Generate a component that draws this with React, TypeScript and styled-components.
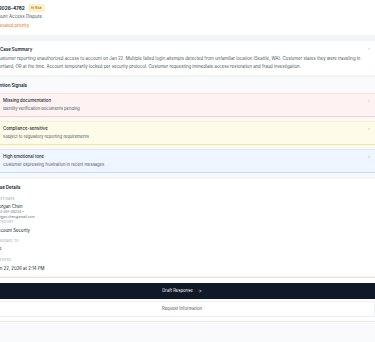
import styled, { createGlobalStyle } from 'styled-components'

const GlobalStyle = createGlobalStyle`
  html, body {
    margin: 0;
    padding: 0;
    background: #f9fafb;
    overflow: hidden;
  }
  body {
    font-family: Inter, 'Liberation Sans', sans-serif;
    -webkit-font-smoothing: antialiased;
  }
`

const Page = styled.div`
  margin-left: -11px;
  width: 386px;
  height: 100vh;
  display: flex;
  flex-direction: column;
  background: #f3f4f6;
`

const Header = styled.header`
  background: #fff;
  padding: 4px 0 5px 1px;
  display: flex;
  flex-direction: column;
  gap: 1px;
`

const TitleRow = styled.div`
  display: flex;
  align-items: center;
  gap: 3px;
  height: 8px;
`

const CaseId = styled.h1`
  margin: 0;
  font-size: 4.7px;
  font-weight: 700;
  color: #111827;
  line-height: 8px;
`

const Badge = styled.span`
  background: #fef3c7;
  color: #b45309;
  font-size: 3.3px;
  font-weight: 500;
  line-height: 8px;
  padding: 0 3px;
  border-radius: 2px;
`

const SubTitle = styled.div`
  font-size: 4.5px;
  color: #4b5563;
  line-height: 8px;
`

const Priority = styled.div`
  display: flex;
  align-items: center;
  gap: 1.5px;
  font-size: 4.3px;
  color: #d9730d;
  line-height: 8px;
`

const Section = styled.section<{ $bg?: string; $top: number }>`
  background: ${p => p.$bg || '#fff'};
  margin-top: ${p => p.$top}px;
  padding: 4px 0;
`

const SectionHead = styled.div<{ $indent: number }>`
  display: flex;
  align-items: center;
  justify-content: space-between;
  padding: 0 4px 0 ${p => p.$indent}px;
  height: 8px;
`

const HeadLabel = styled.div`
  display: flex;
  align-items: center;
  gap: 2px;
  font-size: 4.4px;
  font-weight: 600;
  color: #111827;
`

const Chevron = styled.span<{ $offset?: number }>`
  color: #9ca3af;
  display: flex;
  margin-top: ${p => p.$offset || 0}px;
`

const Body = styled.p`
  margin: 2px 0 0;
  padding: 0 6px 0 7px;
  font-size: 4.3px;
  line-height: 8px;
  color: #4b5563;
`

const SignalList = styled.div`
  display: flex;
  flex-direction: column;
  gap: 4px;
  margin-top: 4px;
`

const tones = {
  red: { bg: '#fef2f2', border: '#fecaca' },
  amber: { bg: '#fefce8', border: '#fde68a' },
  blue: { bg: '#eff6ff', border: '#bfdbfe' },
}

const SignalCard = styled.div<{ $tone: keyof typeof tones }>`
  background: ${p => tones[p.$tone].bg};
  border-top: 1px solid ${p => tones[p.$tone].border}80;
  border-bottom: 1px solid ${p => tones[p.$tone].border};
  padding: 3px 4px 3px 14px;
  display: flex;
  justify-content: space-between;
  align-items: flex-start;
`

const SignalText = styled.div`
  display: block;
`

const SignalTitle = styled.div`
  font-size: 4.3px;
  line-height: 8px;
  color: #1f2937;
  font-weight: 500;
`

const SignalSub = styled.div`
  font-size: 4.1px;
  line-height: 8px;
  color: #4b5563;
`

const Fields = styled.div`
  display: flex;
  flex-direction: column;
  padding: 0 0 0 6px;
  margin-top: 6px;
`

const Field = styled.div<{ $top: number }>`
  display: flex;
  flex-direction: column;
  margin-top: ${p => p.$top}px;
`

const FieldLabel = styled.div`
  font-size: 3.3px;
  line-height: 5px;
  letter-spacing: 0.15px;
  text-transform: uppercase;
  color: #9ca3af;
`

const FieldValue = styled.div<{ $top: number }>`
  font-size: 4.3px;
  line-height: 7px;
  color: #111827;
  margin-top: ${p => p.$top}px;
`

const FieldMeta = styled.div`
  font-size: 3.3px;
  line-height: 5px;
  color: #6b7280;
`

const Footer = styled.footer`
  background: #fff;
  margin-top: 1px;
  border-top: 1px solid #e5e7eb;
  padding: 5px 0 4px;
  display: flex;
  flex-direction: column;
  gap: 2px;
`

const Button = styled.button<{ $primary?: boolean }>`
  all: unset;
  display: flex;
  align-items: center;
  justify-content: center;
  gap: 5px;
  height: ${p => (p.$primary ? 16 : 14)}px;
  background: ${p => (p.$primary ? '#111827' : '#fff')};
  color: ${p => (p.$primary ? '#fff' : '#4b5563')};
  border: ${p => (p.$primary ? 'none' : '1px solid #eef0f3')};
  font-size: 4.2px;
  font-weight: 400;
  font-family: inherit;
`

const Bottom = styled.div`
  flex: 1;
  border-top: 1px solid #fde2e2;
  background: #f9fafb;
`

const ChevronIcon = () => (
  <svg width="4" height="4" viewBox="0 0 24 24" fill="none" stroke="currentColor" strokeWidth="2.5" strokeLinecap="round" strokeLinejoin="round">
    <path d="m9 18 6-6-6-6" />
  </svg>
)

const signals = [
  { tone: 'red' as const, title: 'Missing documentation', sub: 'Identity verification documents pending' },
  { tone: 'amber' as const, title: 'Compliance-sensitive', sub: 'Subject to regulatory reporting requirements' },
  { tone: 'blue' as const, title: 'High emotional tone', sub: 'Customer expressing frustration in recent messages' },
]

export default function App() {
  return (
    <>
      <GlobalStyle />
      <Page>
        <Header>
          <TitleRow>
            <CaseId>CS-2026-4782</CaseId>
            <Badge>At Risk</Badge>
          </TitleRow>
          <SubTitle>Account Access Dispute</SubTitle>
          <Priority>
            <svg width="4.5" height="4.5" viewBox="0 0 24 24" fill="none" stroke="currentColor" strokeWidth="2.5" strokeLinecap="round">
              <path d="M12 19V5M5 12l7-7 7 7" />
            </svg>
            Elevated priority
          </Priority>
        </Header>

        <Section $top={6}>
          <SectionHead $indent={3}>
            <HeadLabel>
              <svg width="6" height="6" viewBox="0 0 24 24" fill="none" stroke="#6b7280" strokeWidth="2" strokeLinecap="round" strokeLinejoin="round">
                <path d="M14 2H6a2 2 0 0 0-2 2v16a2 2 0 0 0 2 2h12a2 2 0 0 0 2-2V8z" />
                <path d="M14 2v6h6M16 13H8M16 17H8" />
              </svg>
              Case Summary
            </HeadLabel>
            <Chevron><ChevronIcon /></Chevron>
          </SectionHead>
          <Body>
            Customer reporting unauthorized access to account on Jan 22. Multiple failed login attempts detected from unfamiliar location (Seattle, WA). Customer states they were traveling in Portland, OR at the time. Account temporarily locked per security protocol. Customer requesting immediate access restoration and fraud investigation.
          </Body>
        </Section>

        <Section $top={2} $bg="#f9fafb">
          <SectionHead $indent={2}>
            <HeadLabel>Attention Signals</HeadLabel>
          </SectionHead>
          <SignalList>
            {signals.map(s => (
              <SignalCard key={s.title} $tone={s.tone}>
                <SignalText>
                  <SignalTitle>{s.title}</SignalTitle>
                  <SignalSub>{s.sub}</SignalSub>
                </SignalText>
                <Chevron $offset={2}><ChevronIcon /></Chevron>
              </SignalCard>
            ))}
          </SignalList>
        </Section>

        <Section $top={2}>
          <SectionHead $indent={5}>
            <HeadLabel>Case Details</HeadLabel>
          </SectionHead>
          <Fields>
            <Field $top={0}>
              <FieldLabel>Customer</FieldLabel>
              <FieldValue $top={1}>Morgan Chen</FieldValue>
              <FieldMeta>#CU-557-89234 •</FieldMeta>
              <FieldMeta>morgan.chen@email.com</FieldMeta>
            </Field>
            <Field $top={0}>
              <FieldLabel>Category</FieldLabel>
              <FieldValue $top={2}>Account Security</FieldValue>
            </Field>
            <Field $top={4.5}>
              <FieldLabel>Assigned to</FieldLabel>
              <FieldValue $top={1.5}>Me</FieldValue>
            </Field>
            <Field $top={5.5}>
              <FieldLabel>Created</FieldLabel>
              <FieldValue $top={2}>Jan 22, 2026 at 2:14 PM</FieldValue>
            </Field>
          </Fields>
        </Section>

        <Footer>
          <Button $primary>
            Draft Response
            <svg width="4" height="4" viewBox="0 0 24 24" fill="none" stroke="currentColor" strokeWidth="2.5" strokeLinecap="round" strokeLinejoin="round">
              <path d="M5 12h14M12 5l7 7-7 7" />
            </svg>
          </Button>
          <Button>Request Information</Button>
        </Footer>
        <Bottom />
      </Page>
    </>
  )
}
